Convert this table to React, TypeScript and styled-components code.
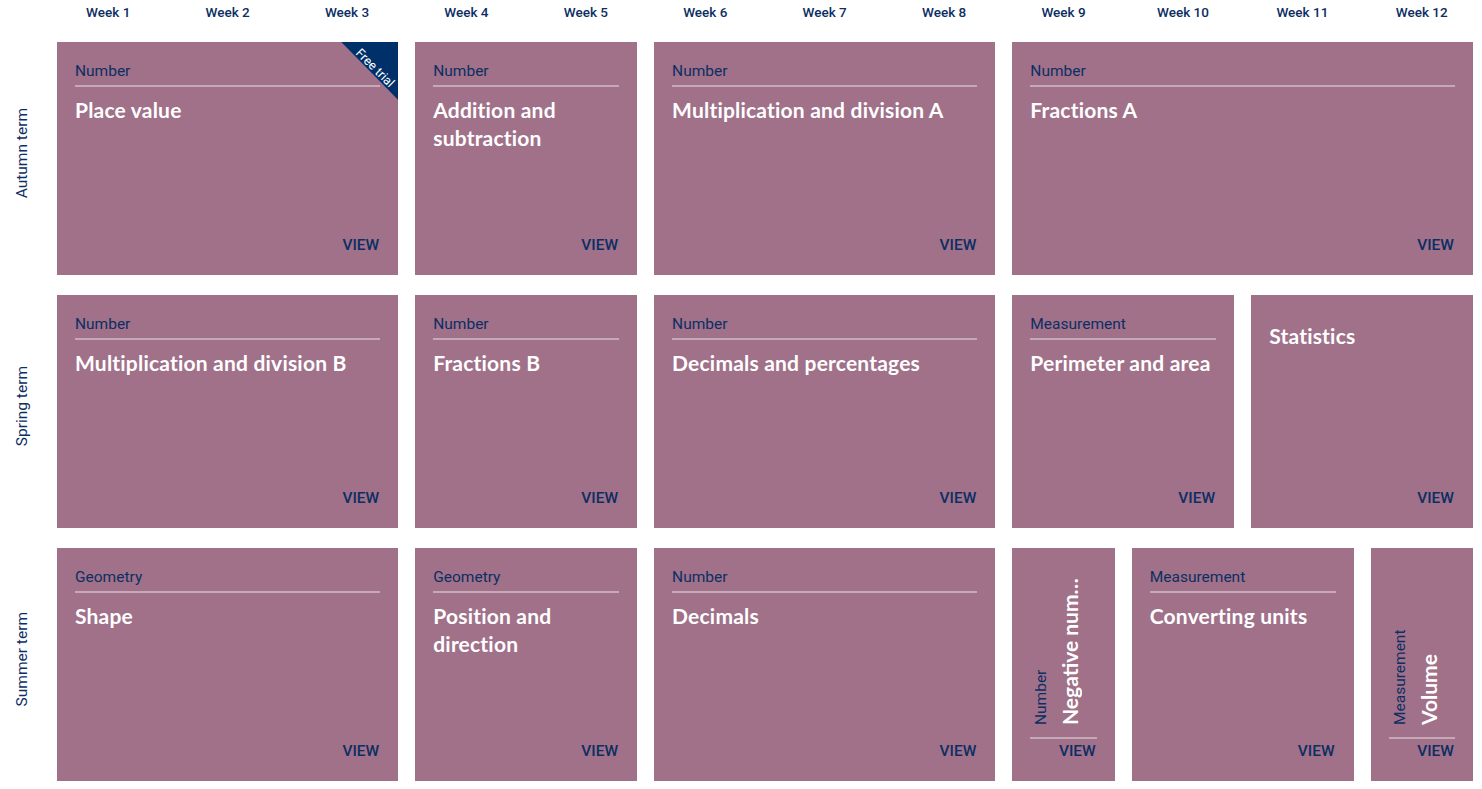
import React from 'react';
import styled, { createGlobalStyle } from 'styled-components';

const GlobalStyle = createGlobalStyle`
  html, body {
    margin: 0;
    padding: 0;
    background: #ffffff;
  }
  body {
    font-family: Roboto, "Liberation Sans", Arial, sans-serif;
  }
`;

const NAVY = '#0c2e63';
const CARD = '#a07189';

// Layout
const Board = styled.div`
  display: grid;
  grid-template-columns: 40px repeat(12, 1fr);
  grid-template-rows: 22px repeat(3, 233px);
  column-gap: 17px;
  row-gap: 20px;
  width: 1473px;
`;

const WeekLabel = styled.div`
  font-size: 13.5px;
  font-weight: 500;
  color: ${NAVY};
  text-align: center;
  line-height: 25px;
`;

const TermCell = styled.div`
  display: flex;
  align-items: center;
  justify-content: center;
  padding-left: 4px;
  padding-bottom: 10px;
`;

const TermLabel = styled.span`
  writing-mode: vertical-rl;
  transform: rotate(180deg);
  font-size: 15.5px;
  color: ${NAVY};
  white-space: nowrap;
`;

const Card = styled.div<{ $span: number }>`
  grid-column: span ${p => p.$span};
  position: relative;
  overflow: hidden;
  background: ${CARD};
  padding: 18px;
  display: flex;
  flex-direction: column;
  box-sizing: border-box;
`;

const Category = styled.div`
  font-size: 15.5px;
  line-height: 23px;
  color: ${NAVY};
  padding-bottom: 2px;
  border-bottom: 2px solid rgba(255, 255, 255, 0.4);
`;

const Title = styled.div`
  margin-top: 9px;
  font-family: Lato, "Open Sans", sans-serif;
  font-weight: 700;
  font-size: 21px;
  letter-spacing: 0.2px;
  line-height: 28px;
  color: #ffffff;
`;

const Spacer = styled.div`
  flex: 1;
`;

const View = styled.div`
  text-align: right;
  font-size: 15.5px;
  font-weight: 500;
  line-height: 24px;
  color: ${NAVY};
  padding-right: 1px;
`;

// Narrow (one week) cards turn their heading on its side
const SideArea = styled.div`
  flex: 1;
  min-height: 0;
  padding: 9px 0 12px;
`;

const SideText = styled.div`
  height: 100%;
  writing-mode: vertical-rl;
  transform: rotate(180deg);
  display: flex;
  flex-direction: column;
  gap: 5px;
`;

const SideCategory = styled.div`
  font-size: 15.5px;
  line-height: 22px;
  color: ${NAVY};
  white-space: nowrap;
`;

const SideTitle = styled.div`
  font-family: Lato, "Open Sans", sans-serif;
  font-weight: 700;
  font-size: 21px;
  line-height: 26px;
  color: #ffffff;
  white-space: nowrap;
  overflow: hidden;
  text-overflow: ellipsis;
`;

const SideRule = styled.div`
  height: 2px;
  background: rgba(255, 255, 255, 0.4);
`;

const Corner = styled.div`
  position: absolute;
  top: 0;
  right: 0;
  width: 57px;
  height: 58px;
  background: #00306a;
  clip-path: polygon(0 0, 100% 0, 100% 100%);
`;

const CornerText = styled.span`
  position: absolute;
  top: 19px;
  right: -7px;
  width: 60px;
  text-align: center;
  transform: rotate(45deg);
  font-size: 12.5px;
  line-height: 14px;
  color: #ffffff;
  white-space: nowrap;
`;

interface Unit {
  category?: string;
  title: string;
  span: number;
  freeTrial?: boolean;
}

interface Term {
  name: string;
  units: Unit[];
}

const terms: Term[] = [
  {
    name: 'Autumn term',
    units: [
      { category: 'Number', title: 'Place value', span: 3, freeTrial: true },
      { category: 'Number', title: 'Addition and subtraction', span: 2 },
      { category: 'Number', title: 'Multiplication and division A', span: 3 },
      { category: 'Number', title: 'Fractions A', span: 4 },
    ],
  },
  {
    name: 'Spring term',
    units: [
      { category: 'Number', title: 'Multiplication and division B', span: 3 },
      { category: 'Number', title: 'Fractions B', span: 2 },
      { category: 'Number', title: 'Decimals and percentages', span: 3 },
      { category: 'Measurement', title: 'Perimeter and area', span: 2 },
      { title: 'Statistics', span: 2 },
    ],
  },
  {
    name: 'Summer term',
    units: [
      { category: 'Geometry', title: 'Shape', span: 3 },
      { category: 'Geometry', title: 'Position and direction', span: 2 },
      { category: 'Number', title: 'Decimals', span: 3 },
      { category: 'Number', title: 'Negative numbers', span: 1 },
      { category: 'Measurement', title: 'Converting units', span: 2 },
      { category: 'Measurement', title: 'Volume', span: 1 },
    ],
  },
];

const weeks = Array.from({ length: 12 }, (_, i) => `Week ${i + 1}`);

const UnitCard: React.FC<{ unit: Unit }> = ({ unit }) => {
  if (unit.span === 1) {
    return (
      <Card $span={1}>
        <SideArea>
          <SideText>
            {unit.category && <SideCategory>{unit.category}</SideCategory>}
            <SideTitle>{unit.title}</SideTitle>
          </SideText>
        </SideArea>
        <SideRule />
        <View>VIEW</View>
      </Card>
    );
  }

  return (
    <Card $span={unit.span}>
      {unit.category && <Category>{unit.category}</Category>}
      <Title>{unit.title}</Title>
      <Spacer />
      <View>VIEW</View>
      {unit.freeTrial && (
        <Corner>
          <CornerText>Free trial</CornerText>
        </Corner>
      )}
    </Card>
  );
};

const App: React.FC = () => {
  return (
    <>
      <GlobalStyle />
      <Board>
        <div />
        {weeks.map(w => (
          <WeekLabel key={w}>{w}</WeekLabel>
        ))}
        {terms.map(term => (
          <React.Fragment key={term.name}>
            <TermCell>
              <TermLabel>{term.name}</TermLabel>
            </TermCell>
            {term.units.map(u => (
              <UnitCard key={u.title} unit={u} />
            ))}
          </React.Fragment>
        ))}
      </Board>
    </>
  );
};

export default App;
